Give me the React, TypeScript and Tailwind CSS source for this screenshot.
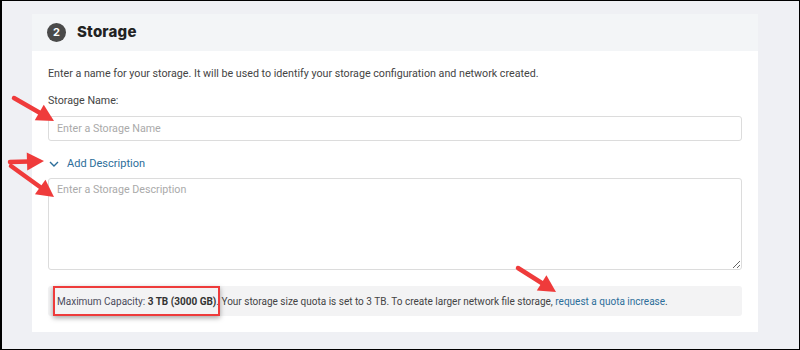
import React from 'react';

const Arrow = ({ x1, y1, x2, y2 }: { x1: number; y1: number; x2: number; y2: number }) => {
  const a = Math.atan2(y2 - y1, x2 - x1);
  const len = 17;
  const w = 9;
  const bx = x2 - len * Math.cos(a);
  const by = y2 - len * Math.sin(a);
  const px = -Math.sin(a) * w;
  const py = Math.cos(a) * w;
  return (
    <g>
      <line x1={x1} y1={y1} x2={bx + 2 * Math.cos(a)} y2={by + 2 * Math.sin(a)} stroke="#ef3b3b" strokeWidth={4.5} strokeLinecap="round" />
      <polygon points={`${x2},${y2} ${bx + px},${by + py} ${bx - px},${by - py}`} fill="#ef3b3b" />
    </g>
  );
};

export default function App() {
  return (
    <div className="relative w-[800px] h-[350px] bg-[#eff0f4] border border-black border-l-2 overflow-hidden font-['Roboto',sans-serif] text-[10.7px] text-[#444]">
      <div className="ml-[30px] mt-[13px] w-[726px] bg-white">
        {/* header */}
        <div className="flex items-center h-[37px] bg-[#f3f5f7] pl-[15px] gap-[11px]">
          <span className="w-[19px] h-[19px] rounded-full bg-[#4a4a4a] text-white text-[11px] font-bold flex items-center justify-center font-['Inter',sans-serif]">2</span>
          <span className="text-[15px] font-extrabold text-[#222] font-['Inter',sans-serif] tracking-[0.2px]">Storage</span>
        </div>

        <div className="px-[16px] pt-[15px] pb-[16px]">
          <p className="leading-[16px]">Enter a name for your storage. It will be used to identify your storage configuration and network created.</p>
          <p className="mt-[11px] leading-[16px]">Storage Name:</p>
          <input
            placeholder="Enter a Storage Name"
            className="mt-[7px] block w-full h-[25px] rounded-[3px] border border-[#dcdcdc] px-[8px] placeholder:text-[#aaa] outline-none"
          />
          <div className="flex items-center gap-[8px] mt-[15px] text-[#2c6e9a] leading-[16px] text-[11px]">
            <svg width="10" height="7" viewBox="0 0 10 7" className="ml-[1px]">
              <path d="M1 1 L5 5 L9 1" stroke="#2c6e9a" strokeWidth="1.4" fill="none" />
            </svg>
            <span>Add Description</span>
          </div>
          <textarea
            placeholder="Enter a Storage Description"
            className="mt-[6px] block w-full h-[92px] rounded-[3px] border border-[#dcdcdc] px-[8px] py-[3px] placeholder:text-[#aaa] outline-none"
          />
          <div className="mt-[16px] flex items-center h-[30px] bg-[#f3f3f4] rounded-[3px] pl-[9px] whitespace-nowrap text-[10px]">
            <span className="relative">
              <span className="absolute -left-[4px] -right-[4px] -top-[8px] -bottom-[7px] border-[2px] border-[#ee3b3b] shadow-[0_2px_5px_rgba(0,0,0,0.35)]" />
              <span className="text-[#4a4a5a]">Maximum Capacity: </span>
              <b className="text-[#333]">3 TB (3000 GB)</b>
            </span>
            <span>. Your storage size quota is set to 3 TB. To create larger network file storage,&nbsp;</span>
            <span className="text-[#2c6e9a]">request a quota increase</span>
            <span>.</span>
          </div>
        </div>
      </div>

      <svg className="absolute left-0 top-0 pointer-events-none" width="800" height="350">
        <Arrow x1={12} y1={97} x2={52} y2={120} />
        <Arrow x1={8} y1={161} x2={42} y2={160} />
        <Arrow x1={9} y1={165} x2={52} y2={196} />
        <Arrow x1={516} y1={267} x2={554} y2={291} />
      </svg>
    </div>
  );
}
